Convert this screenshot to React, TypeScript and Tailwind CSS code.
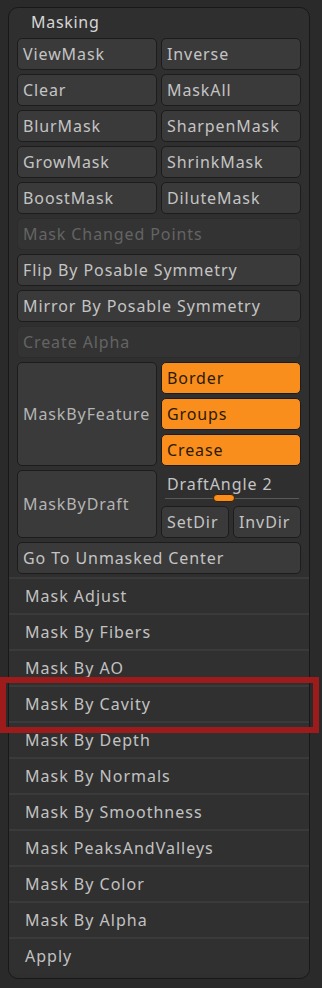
import React from "react";

const font = { fontFamily: '"Noto Sans", "Open Sans", sans-serif' };

function Btn({ label, className = "" }: { label: string; className?: string }) {
  return (
    <div
      className={`h-[32px] flex items-center pl-[5px] rounded-[5px] border border-[#1c1c1c] bg-[#3a3a3a] text-[#c4c4c4] text-[16px] tracking-[0.9px] leading-none whitespace-nowrap overflow-hidden ${className}`}
    >
      {label}
    </div>
  );
}

function Disabled({ label }: { label: string }) {
  return (
    <div className="h-[32px] flex items-center pl-[5px] rounded-[5px] border border-[#2c2c2c] bg-[#333333] text-[#646464] text-[16px] tracking-[0.9px] leading-none">
      {label}
    </div>
  );
}

function Orange({ label }: { label: string }) {
  return (
    <div className="h-[32px] flex items-center pl-[5px] rounded-[5px] border border-[#1c1c1c] bg-[#f98e1d] text-[#2b1a06] text-[16px] tracking-[0.9px] leading-none">
      {label}
    </div>
  );
}

const pairs: [string, string][] = [
  ["ViewMask", "Inverse"],
  ["Clear", "MaskAll"],
  ["BlurMask", "SharpenMask"],
  ["GrowMask", "ShrinkMask"],
  ["BoostMask", "DiluteMask"],
];

const items = [
  "Mask Adjust",
  "Mask By Fibers",
  "Mask By AO",
  "Mask By Cavity",
  "Mask By Depth",
  "Mask By Normals",
  "Mask By Smoothness",
  "Mask PeaksAndValleys",
  "Mask By Color",
  "Mask By Alpha",
  "Apply",
];

export default function App() {
  return (
    <div className="relative w-[322px] h-[988px] bg-[#2a2a2a] pt-[7px] pl-[8px]" style={font}>
      <div className="w-[302px] h-[972px] rounded-[10px] border border-[#181818] bg-[#2f2f2f] overflow-hidden flex flex-col">
        <div className="h-[24px] shrink-0 flex items-end pl-[22px] text-[16px] tracking-[0.7px] leading-none text-[#d6d6d6] pb-[2px]">
          Masking
        </div>
        <div className="flex flex-col gap-[4px] pl-[8px] pr-[8px] pt-[6px]">
          {pairs.map(([a, b]) => (
            <div key={a} className="grid grid-cols-2 gap-[4px]">
              <Btn label={a} />
              <Btn label={b} />
            </div>
          ))}
          <Disabled label="Mask Changed Points" />
          <Btn label="Flip By Posable Symmetry" />
          <Btn label="Mirror By Posable Symmetry" />
          <Disabled label="Create Alpha" />
          <div className="grid grid-cols-2 gap-[4px]">
            <div className="h-[104px] flex items-center pl-[5px] rounded-[5px] border border-[#1c1c1c] bg-[#3a3a3a] text-[#b4b4b4] text-[16px] tracking-[0.9px] leading-none">
              MaskByFeature
            </div>
            <div className="flex flex-col gap-[4px]">
              <Orange label="Border" />
              <Orange label="Groups" />
              <Orange label="Crease" />
            </div>
          </div>
          <div className="grid grid-cols-2 gap-[4px]">
            <div className="h-[68px] flex items-center pl-[5px] rounded-[5px] border border-[#1c1c1c] bg-[#3a3a3a] text-[#b4b4b4] text-[16px] tracking-[0.9px] leading-none">
              MaskByDraft
            </div>
            <div className="flex flex-col">
              <div className="h-[22px] flex items-end pl-[6px] text-[16px] tracking-[0.9px] leading-none text-[#c4c4c4]">
                DraftAngle 2
              </div>
              <div className="relative h-[14px]">
                <div className="absolute left-[4px] right-[2px] top-[6px] h-[1px] bg-[#5a5a5a]" />
                <div className="absolute left-[52px] top-[2px] w-[22px] h-[8px] rounded-full bg-[#f98e1d] border border-[#3a2000]" />
              </div>
              <div className="grid grid-cols-2 gap-[4px]">
                <Btn label="SetDir" />
                <Btn label="InvDir" />
              </div>
            </div>
          </div>
          <Btn label="Go To Unmasked Center" />
        </div>
        <div className="mt-[3px] flex flex-col">
          {items.map((t) => (
            <div
              key={t}
              className="h-[36px] flex items-center pl-[16px] border-t-2 border-[#3a3a3a] bg-[#303030] text-[#c2c2c2] text-[16px] tracking-[1px] leading-none"
            >
              {t}
            </div>
          ))}
        </div>
      </div>
      <div className="absolute left-[0px] top-[677px] w-[319px] h-[56px] border-[6px] border-[#9d1b1b] pointer-events-none" />
    </div>
  );
}
